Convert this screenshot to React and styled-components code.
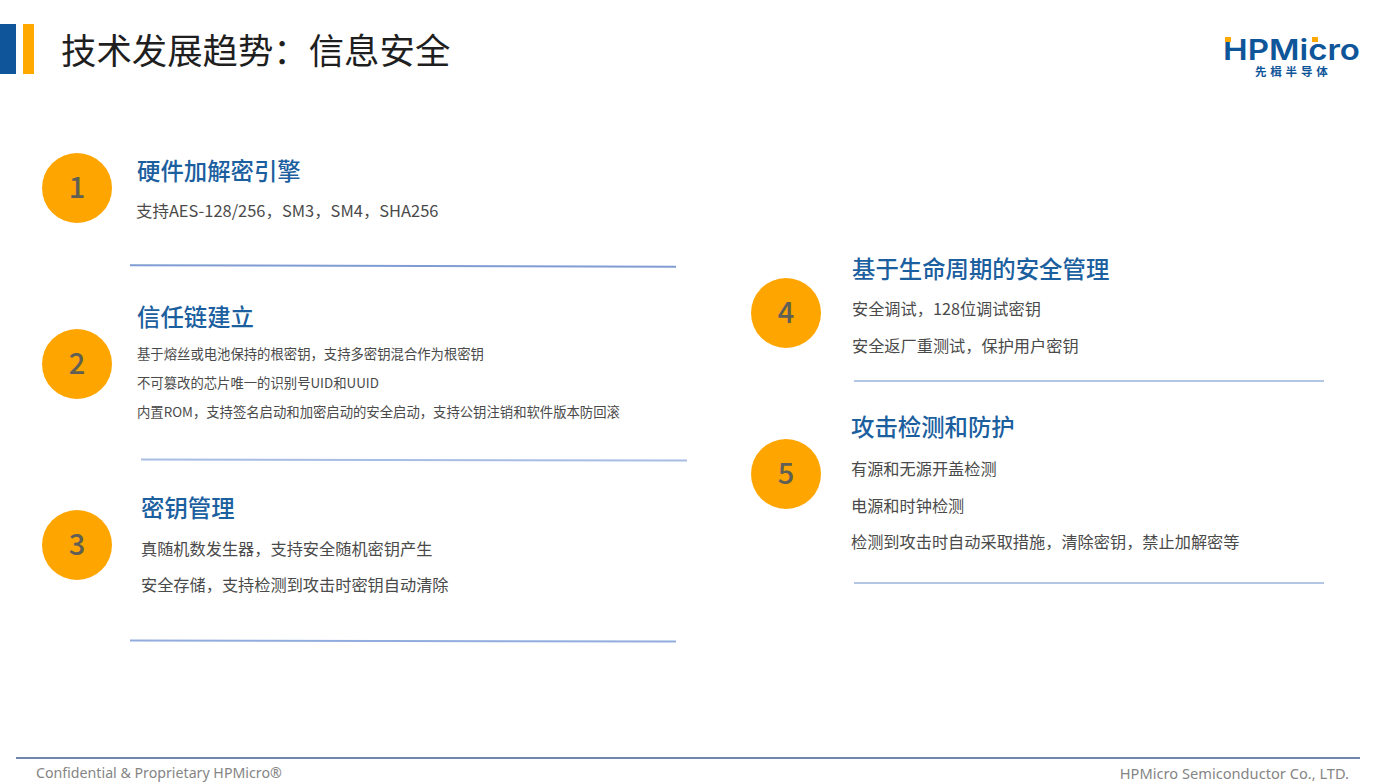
import React from 'react'
import styled, { createGlobalStyle } from 'styled-components'

const cjk = '"Noto Sans CJK SC", "Noto Sans", sans-serif'

// full-width punctuation, kept as escapes so it can't get swapped for ascii
const COMMA = '\uFF0C'
const COLON = '\uFF1A'

const Global = createGlobalStyle`
  html, body {
    margin: 0;
    background: #fff;
    font-family: ${cjk};
  }
`

const Slide = styled.div`
  width: 1392px;
  height: 782px;
  display: flex;
  flex-direction: column;
  overflow: hidden;
  background: #fff;
`

const Header = styled.header`
  height: 100px;
  display: flex;
  align-items: flex-start;
  justify-content: space-between;
  padding: 24px 32px 0 0;
  box-sizing: border-box;
`

const TitleWrap = styled.div`
  display: flex;
  align-items: flex-start;
`

const BlueBar = styled.div`
  width: 16px;
  height: 50px;
  background: #0f5599;
`

const OrangeBar = styled.div`
  width: 11px;
  height: 50px;
  margin-left: 7px;
  background: #ffa800;
`

const Title = styled.h1`
  margin: 0 0 0 27px;
  font-size: 35.4px;
  line-height: 50px;
  font-weight: 400;
  color: #1f1f1f;
  white-space: nowrap;
`

const Logo = styled.svg`
  display: block;
  margin-top: 13px;
  overflow: visible;
`

const Body = styled.main`
  flex: 1;
  display: flex;
`

const Column = styled.div`
  width: ${p => p.$width}px;
  padding-left: ${p => p.$left}px;
  padding-top: ${p => p.$top}px;
  box-sizing: border-box;
`

const Section = styled.section`
  margin-top: ${p => p.$space}px;
`

const Row = styled.div`
  display: flex;
  align-items: flex-start;
  gap: ${p => p.$gap}px;
`

const Circle = styled.div`
  flex: none;
  width: 70px;
  height: 70px;
  padding-bottom: 6px;
  box-sizing: border-box;
  margin-top: ${p => p.$top}px;
  border-radius: 50%;
  background: #ffa500;
  color: #5f5f55;
  font-size: 29px;
  font-weight: 500;
  display: flex;
  align-items: center;
  justify-content: center;
`

const Content = styled.div`
  min-width: 0;
`

const Heading = styled.h2`
  margin: 0 0 ${p => p.$after}px;
  font-size: 23.4px;
  line-height: 34px;
  font-weight: 500;
  color: #1c5f9f;
  white-space: nowrap;
`

const Line = styled.p`
  margin: 0 0 0 ${p => p.$shift || 0}px;
  font-size: ${p => p.$size}px;
  line-height: ${p => p.$height}px;
  color: #4a4a4a;
  white-space: nowrap;
`

const Divider = styled.hr`
  margin: ${p => p.$top}px 0 0 ${p => p.$left}px;
  width: ${p => p.$width}px;
  height: 2px;
  border: 0;
  background: ${p => p.$color};
  transform: rotate(${p => p.$tilt}deg);
`

const Footer = styled.footer`
  margin: 0 32px 0 16px;
  border-top: 2px solid #7186ad;
  height: 25px;
  box-sizing: border-box;
  padding: 5px 11px 0 20px;
  display: flex;
  justify-content: space-between;
  font-family: "Noto Sans", sans-serif;
  line-height: 18px;
  color: #858585;
`

const FootText = styled.span`
  font-size: ${p => p.$size}px;
`

const left = [
  {
    n: 1, space: 0, gap: 25, circle: 0, after: 5, size: 16.45, height: 36, shift: -1, dTop: 37, dLeft: 88, dWidth: 546,
    color: '#7f9dd2', tilt: 0.15,
    title: '硬件加解密引擎',
    lines: [`支持AES-128/256${COMMA}SM3${COMMA}SM4${COMMA}SHA256`],
  },
  {
    n: 2, space: 32, gap: 25, circle: 30, after: 6, size: 13.35, height: 29, dTop: 33, dLeft: 99, dWidth: 546,
    color: '#a7bde3', tilt: 0.12,
    title: '信任链建立',
    lines: [
      `基于熔丝或电池保持的根密钥${COMMA}支持多密钥混合作为根密钥`,
      '不可篡改的芯片唯一的识别号UID和UUID',
      `内置ROM${COMMA}支持签名启动和加密启动的安全启动${COMMA}支持公钥注销和软件版本防回滚`,
    ],
  },
  {
    n: 3, space: 29, gap: 29, circle: 20, after: 6, size: 16.2, height: 36, dTop: 38, dLeft: 88, dWidth: 546,
    color: '#93acde', tilt: 0.12,
    title: '密钥管理',
    lines: [`真随机数发生器${COMMA}支持安全随机密钥产生`, `安全存储${COMMA}支持检测到攻击时密钥自动清除`],
  },
]

const right = [
  {
    n: 4, space: 0, gap: 31, circle: 27, after: 5, size: 16.2, height: 36.5, dTop: 17, dLeft: 103, dWidth: 470,
    color: '#b3c6e6', tilt: 0,
    title: '基于生命周期的安全管理',
    lines: [`安全调试${COMMA}128位调试密钥`, `安全返厂重测试${COMMA}保护用户密钥`],
  },
  {
    n: 5, space: 27, gap: 30, circle: 30, after: 7, size: 16.2, height: 36.5, dTop: 22, dLeft: 103, dWidth: 470,
    color: '#b3c6e6', tilt: 0,
    title: '攻击检测和防护',
    lines: ['有源和无源开盖检测', '电源和时钟检测', `检测到攻击时自动采取措施${COMMA}清除密钥${COMMA}禁止加解密等`],
  },
]

function Item({ item }) {
  return (
    <Section $space={item.space}>
      <Row $gap={item.gap}>
        <Circle $top={item.circle}>{item.n}</Circle>
        <Content>
          <Heading $after={item.after}>{item.title}</Heading>
          {item.lines.map(t => (
            <Line key={t} $size={item.size} $height={item.height} $shift={item.shift}>{t}</Line>
          ))}
        </Content>
      </Row>
      <Divider $top={item.dTop} $left={item.dLeft} $width={item.dWidth} $color={item.color} $tilt={item.tilt} />
    </Section>
  )
}

function HpmLogo() {
  return (
    <Logo width="138" height="56" viewBox="0 0 138 56">
      <text x="1" y="23" fontFamily="Inter, sans-serif" fontWeight="600" fontSize="29" fill="#0f5599" textLength="137" lengthAdjust="spacingAndGlyphs">HPMicro</text>
      <rect x="3" y="0" width="6" height="5" fill="#ffa800" />
      <rect x="90" y="0" width="6" height="5" fill="#ffa800" />
      <text x="33" y="39" fontFamily={cjk} fontWeight="700" fontSize="11.5" fill="#0f5599" letterSpacing="3.8">先楫半导体</text>
    </Logo>
  )
}

export default function App() {
  return (
    <Slide>
      <Global />
      <Header>
        <TitleWrap>
          <BlueBar />
          <OrangeBar />
          <Title>{`技术发展趋势${COLON}信息安全`}</Title>
        </TitleWrap>
        <HpmLogo />
      </Header>
      <Body>
        <Column $width={709} $left={42} $top={53}>
          {left.map(item => <Item key={item.n} item={item} />)}
        </Column>
        <Column $width={683} $left={42} $top={151}>
          {right.map(item => <Item key={item.n} item={item} />)}
        </Column>
      </Body>
      <Footer>
        <FootText $size={14.2}>Confidential &amp; Proprietary HPMicro®</FootText>
        <FootText $size={14.65}>HPMicro Semiconductor Co., LTD.</FootText>
      </Footer>
    </Slide>
  )
}
